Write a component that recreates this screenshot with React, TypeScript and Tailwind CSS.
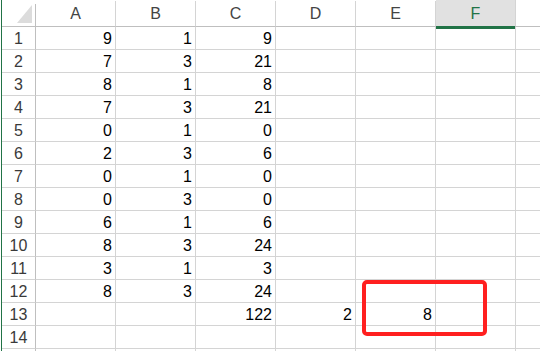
import React from "react";

const rows: (string | number)[][] = [
  [9, 1, 9, "", "", ""],
  [7, 3, 21, "", "", ""],
  [8, 1, 8, "", "", ""],
  [7, 3, 21, "", "", ""],
  [0, 1, 0, "", "", ""],
  [2, 3, 6, "", "", ""],
  [0, 1, 0, "", "", ""],
  [0, 3, 0, "", "", ""],
  [6, 1, 6, "", "", ""],
  [8, 3, 24, "", "", ""],
  [3, 1, 3, "", "", ""],
  [8, 3, 24, "", "", ""],
  ["", "", 122, 2, 8, ""],
  ["", "", "", "", "", ""],
  ["", "", "", "", "", ""],
];

const cols = ["A", "B", "C", "D", "E", "F", ""];

export default function App() {
  return (
    <div className="relative w-[540px] h-[351px] overflow-hidden bg-white font-['Liberation_Sans',Arial,sans-serif] text-[16px] text-black">
      <div className="ml-[1px] border-l border-[#217346] h-full">
        {/* header */}
        <div className="flex h-[27px]">
          <div className="w-[34px] shrink-0 flex flex-col">
            <div className="h-[4px]" />
            <div className="relative flex-1 border-r border-b border-[#bfbfbf]">
              <svg className="absolute left-0 top-0" width="33" height="22" viewBox="0 0 33 22">
                <polygon points="30,1 30,19 15,19" fill="#dcdcdc" />
              </svg>
            </div>
          </div>
          {cols.map((c, k) => (
            <div key={k} className="w-[80px] shrink-0 flex flex-col">
              <div className="h-[4px]" />
              {c === "F" ? (
                <div className="flex-1 flex items-center justify-center bg-[#e1e1e1] border-r border-[#d4d4d4] border-b-[3px] border-b-[#217346] text-[#217346] pt-[2px]">
                  {c}
                </div>
              ) : (
                <div className="flex-1 flex items-center justify-center border-r border-[#d4d4d4] border-b border-b-[#bfbfbf] text-[#444] pt-[1px]">
                  {c}
                </div>
              )}
            </div>
          ))}
        </div>
        {/* rows */}
        {rows.map((r, i) => (
          <div key={i} className="flex h-[23px]">
            <div className="w-[34px] shrink-0 border-r border-r-[#bfbfbf] border-b border-b-[#d4d4d4] text-center text-[#3a3a3a] leading-[20px] pt-[2px]">
              {i < 14 ? i + 1 : ""}
            </div>
            {[...r, ""].map((v, j) => (
              <div
                key={j}
                className="w-[80px] shrink-0 border-r border-b border-[#d4d4d4] text-right pr-[3px] leading-[20px] pt-[2px]"
              >
                {v}
              </div>
            ))}
          </div>
        ))}
      </div>
      <div className="absolute left-[362px] top-[280px] w-[125px] h-[56px] border-4 border-[#ff2020] rounded-[5px]" />
    </div>
  );
}
